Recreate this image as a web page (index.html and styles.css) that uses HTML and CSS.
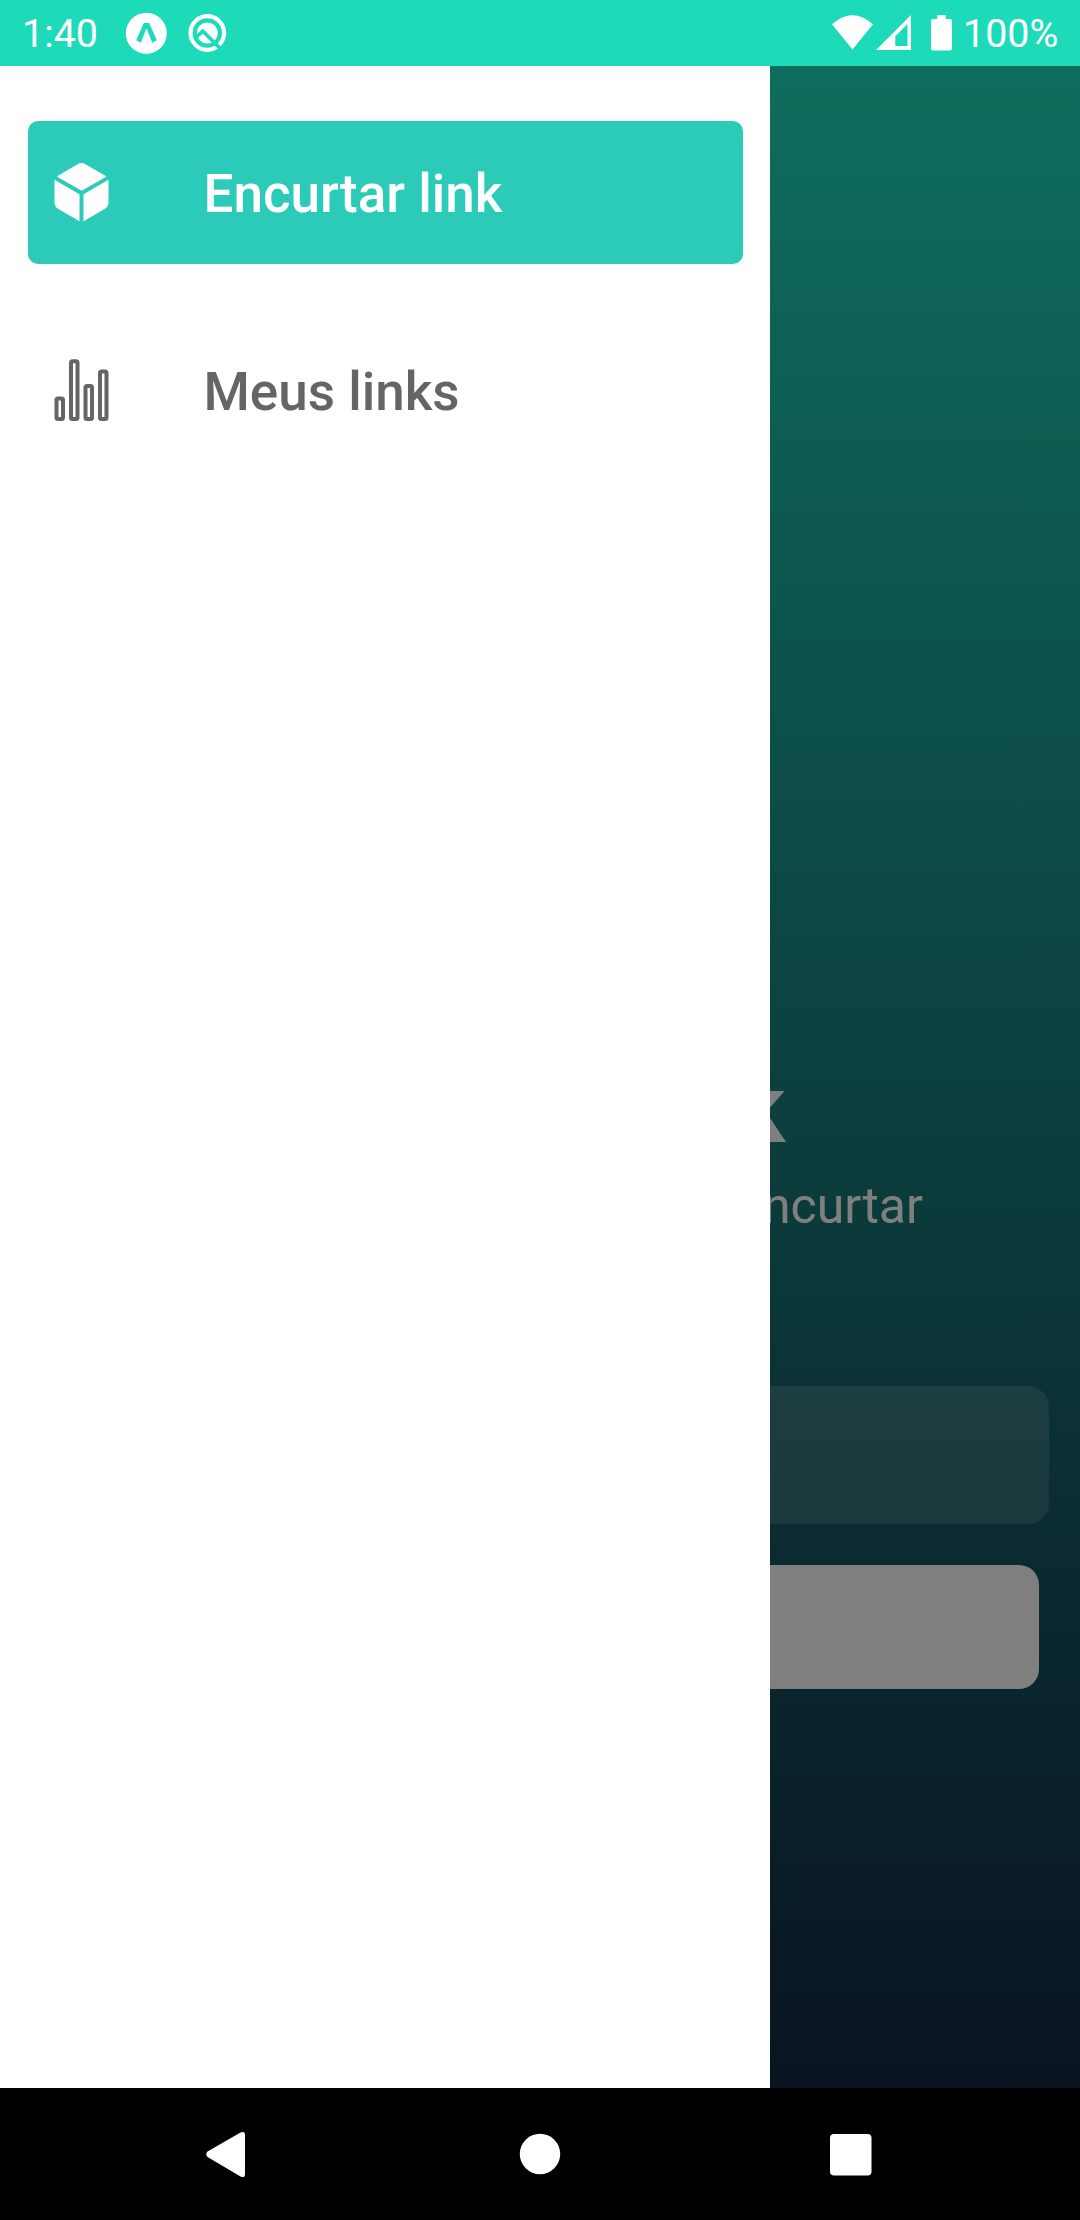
FILE: index.html
```html
<!DOCTYPE html>
<html lang="pt-BR">
<head>
<meta charset="utf-8">
<title>Encurtar link</title>
<link rel="stylesheet" href="styles.css">
</head>
<body>
<div class="phone">
  <header class="status">
    <span class="clock">1:40</span>
    <svg class="status-left" width="120" height="66" viewBox="120 0 120 66">
      <circle cx="146.3" cy="33.3" r="20.5" fill="#fff"/>
      <path d="M143.8 23h5.4l7.6 17.3-4.6 2.4-5.7-14.5-5.7 14.5-4.6-2.4z" fill="#1ddbb9"/>
      <circle cx="207.300" cy="33" r="16.800" fill="none" stroke="#fff" stroke-width="4.200"/>
      <circle cx="207.300" cy="33" r="10.500" fill="#fff"/>
      <path d="M195 38.200L202.800 31.200L222 50.200" fill="none" stroke="#1ddbb9" stroke-width="3.600"/>
    </svg>
    <svg class="status-right" width="130" height="66" viewBox="830 0 130 66">
      <path d="M832 24.3Q852.5 6.200 873 24.3L852.500 49.500z" fill="#fff"/>
      <path d="M876 50L911 15V50zM895.300 46H907.500V24L895.300 36.200z" fill="#fff" fill-rule="evenodd"/>
      <path d="M937.300 15h8.400v4h4.300q2 0 2 2v27.500q0 2-2 2h-17q-2 0-2-2V21q0-2 2-2h4.300z" fill="#fff"/>
    </svg>
    <span class="charge">100%</span>
  </header>
  <main class="screen">
    <section class="home">
      <h1 class="title">k</h1>
      <p class="subtitle">encurtar</p>
      <div class="field"></div>
      <div class="button"></div>
    </section>
    <div class="scrim"></div>
    <nav class="drawer">
      <a class="item active">
        <svg class="icon" width="63" height="63" viewBox="49.5 161 63 63" fill="currentColor">
          <path d="M57 175.900L77.500 164Q81 162 84.500 164L105.300 175.900V176.900L81.200 190.800L57 176.900z"/>
          <path d="M54 179.800L79 194.200V221.300L57.500 208.800Q54 206.500 54 202.500z"/>
          <path d="M108 179.800L83 194.200V221.300L104.500 208.800Q108 206.500 108 202.500z"/>
        </svg>
        <span class="label">Encurtar link</span>
      </a>
      <a class="item">
        <svg class="icon" width="63" height="63" viewBox="49.500 359 63 63" fill="none" stroke="currentColor" stroke-width="4">
          <rect x="56" y="398.500" width="6.500" height="20.500" rx="1.500"/>
          <rect x="70.500" y="361.200" width="6.500" height="57.800" rx="1.500"/>
          <rect x="85" y="386" width="6.500" height="33" rx="1.500"/>
          <rect x="99.500" y="371.500" width="6.500" height="47.500" rx="1.500"/>
        </svg>
        <span class="label">Meus links</span>
      </a>
    </nav>
  </main>
  <footer class="navbar">
    <svg width="1080" height="132" viewBox="0 2088 1080 132" fill="#fff">
      <path d="M207.500 2151.500L240.500 2132.500Q245 2130.500 245 2135V2174Q245 2178.500 240.500 2176.500L207.500 2157Q205 2154.300 207.500 2151.500z"/>
      <circle cx="540" cy="2154" r="20.200"/>
      <rect x="830" y="2134" width="41.500" height="41.500" rx="4"/>
    </svg>
  </footer>
</div>
</body>
</html>
```
FILE: styles.css
```css
* { box-sizing: border-box; }
body { margin: 0; font-family: Roboto, sans-serif; }
.phone {
  width: 1080px;
  height: 2220px;
  display: flex;
  flex-direction: column;
  overflow: hidden;
}
.status {
  height: 66px;
  display: flex;
  align-items: center;
  padding: 0 22px;
  background: #1ddbb9;
  color: #fff;
  font-size: 39.4px;
  line-height: 66px;
}
.clock { width: 98px; padding-top: 2px; }
.status-right { margin-left: auto; }
.charge { width: 98px; padding: 2px 0 0 3px; }
.screen {
  position: relative;
  height: 2022px;
  background: linear-gradient(#1ddbb9, #132742);
}
.home {
  height: 100%;
  padding: 999px 31px 0;
  color: #fff;
}
.title {
  margin: 0;
  padding-right: 264px;
  height: 88px;
  line-height: 88px;
  font-size: 96px;
  font-weight: 700;
  text-align: right;
}
.subtitle {
  margin: 22px 0 0;
  padding-right: 126px;
  height: 62px;
  line-height: 62px;
  font-size: 50px;
  text-align: right;
}
.field {
  height: 138px;
  margin-top: 149px;
  border-radius: 21px;
  background: rgba(255, 255, 255, 0.15);
}
.button {
  height: 124px;
  margin: 41px 10px 0;
  border-radius: 20px;
  background: #fff;
}
.scrim {
  position: absolute;
  inset: 0;
  background: rgba(0, 0, 0, 0.5);
}
.drawer {
  position: absolute;
  inset: 0 auto 0 0;
  width: 770px;
  padding: 55px 27px 0 28px;
  display: flex;
  flex-direction: column;
  gap: 55px;
  background: #fff;
}
.item {
  height: 143px;
  padding: 0 21.5px;
  display: flex;
  align-items: center;
  gap: 91px;
  border-radius: 10px;
  color: #656566;
  font-size: 53px;
  font-weight: 500;
}
.label { padding-top: 3px; }
.active { background: #2ccbb9; color: #fff; }
.navbar { height: 132px; background: #000; }
.navbar svg { display: block; }
```
